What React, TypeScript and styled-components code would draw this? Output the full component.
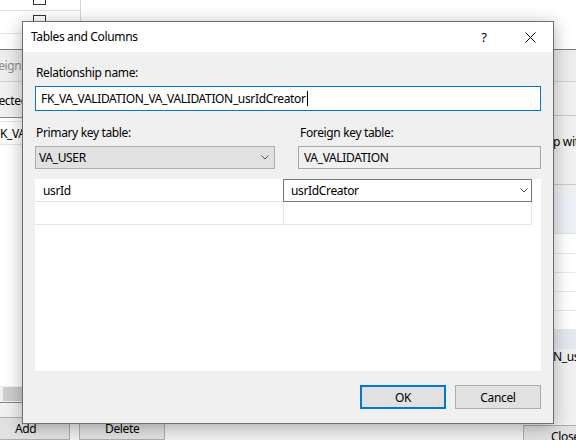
import React from "react";
import styled, { createGlobalStyle } from "styled-components";

const GlobalStyle = createGlobalStyle`
  html, body { margin: 0; padding: 0; background: #fff; }
  body { font-family: "Noto Sans", "Segoe UI", sans-serif; font-size: 12px; color: #000; }
  * { box-sizing: border-box; }
`;

const FONT = `"Noto Sans", "Segoe UI", sans-serif`;

const Screen = styled.div`
  position: relative;
  width: 576px;
  height: 440px;
  overflow: hidden;
  background: #fff;
  display: flex;
  flex-direction: column;
  font-family: ${FONT};
  font-size: 12px;
  letter-spacing: -0.35px;
`;

/* ---------- background: table designer strip ---------- */
const DesignerStrip = styled.div`
  width: 81px;
  height: 45px;
  margin-bottom: 4px;
  border-right: 1px solid #d6d6d6;
  display: flex;
  flex-direction: column;
  flex-shrink: 0;
`;

const DesignerRow = styled.div<{ $h: number }>`
  height: ${(p) => p.$h}px;
  border-bottom: 1px solid #e2e2e2;
  flex-shrink: 0;
`;

const CheckBox = styled.div<{ $top: number }>`
  width: 13px;
  height: 13px;
  margin-left: 33px;
  margin-top: ${(p) => p.$top}px;
  border: 1px solid #333;
  background: #fff;
`;

/* ---------- background: parent window ---------- */
const ParentWindow = styled.div`
  flex: 1;
  border-top: 1px solid #7c7c7c;
  background: #f0f0f0;
  display: flex;
  flex-direction: column;
  min-height: 0;
`;

const ParentTitle = styled.div`
  height: 32px;
  flex-shrink: 0;
  border-bottom: 1px solid #cfcfcf;
  background: #ededed;
  display: flex;
  align-items: center;
  color: #8c8c8c;
  white-space: nowrap;
`;

const ParentTitleText = styled.span`
  margin-left: -19px;
`;

const ParentBody = styled.div`
  flex: 1;
  display: flex;
  justify-content: space-between;
  min-height: 0;
`;

const LeftPane = styled.div`
  width: 200px;
  margin-left: -10px;
  display: flex;
  flex-direction: column;
`;

const PaneLabel = styled.div`
  margin-top: 11px;
  line-height: 16px;
  margin-left: -7px;
  white-space: nowrap;
`;

const ListBox = styled.div`
  margin-top: 8px;
  height: 293px;
  background: #fff;
  border: 1px solid #828790;
  display: flex;
  flex-direction: column;
`;

const ListItem = styled.div`
  margin-top: 3px;
  height: 24px;
  border-top: 1px solid #e4e4e4;
  border-bottom: 1px solid #e4e4e4;
  padding-left: 3px;
  display: flex;
  align-items: center;
  white-space: nowrap;
`;

const ListSpacer = styled.div`
  flex: 1;
`;

const HScroll = styled.div`
  height: 16px;
  background: #f0f0f0;
  display: flex;
  align-items: center;
`;

const HThumb = styled.div`
  margin-left: 12px;
  width: 150px;
  height: 14px;
  background: #cdcdcd;
`;

const PaneButtons = styled.div`
  margin-top: 14px;
  display: flex;
  gap: 9px;
`;

const PaneButton = styled.div<{ $w: number; $pad: number }>`
  width: ${(p) => p.$w}px;
  height: 23px;
  background: #e1e1e1;
  border: 1px solid #adadad;
  padding-left: ${(p) => p.$pad}px;
  display: flex;
  align-items: center;
`;

const RightPane = styled.div`
  width: 60px;
  display: flex;
  flex-direction: column;
  white-space: nowrap;
`;

const InfoTop = styled.div`
  height: 34px;
  border-bottom: 1px solid #cacaca;
  flex-shrink: 0;
`;

const InfoText = styled.div`
  height: 69px;
  border-bottom: 1px solid #cacaca;
  padding-top: 18px;
  padding-left: 37px;
  line-height: 16px;
  flex-shrink: 0;
`;

const PropHeader = styled.div`
  margin-top: 10px;
  height: 39px;
  background: #eceff5;
  border-bottom: 1px solid #dfe2ea;
  flex-shrink: 0;
`;

const PropRow = styled.div<{ $h: number; $sel?: boolean }>`
  height: ${(p) => p.$h}px;
  background: ${(p) => (p.$sel ? "#e4e8f0" : "#fff")};
  border-bottom: 1px solid #e6e8ee;
  flex-shrink: 0;
`;

const PropValue = styled.div`
  padding-left: 37px;
  line-height: 16px;
`;

const CloseButton = styled.div`
  margin-top: auto;
  margin-bottom: -8px;
  margin-left: 7px;
  width: 80px;
  height: 23px;
  background: #e1e1e1;
  border: 1px solid #adadad;
  padding-left: 27px;
  display: flex;
  align-items: center;
  flex-shrink: 0;
`;

/* ---------- dialog ---------- */
const Dialog = styled.div`
  position: absolute;
  left: 22px;
  top: 21px;
  width: 532px;
  height: 403px;
  border: 1px solid #6e6e6e;
  background: #f0f0f0;
  box-shadow: 0 3px 16px rgba(0, 0, 0, 0.3);
  display: flex;
  flex-direction: column;
`;

const TitleBar = styled.div`
  height: 30px;
  flex-shrink: 0;
  background: #fff;
  display: flex;
  align-items: center;
`;

const Title = styled.div`
  flex: 1;
  padding-left: 8px;
  line-height: 16px;
`;

const CaptionButton = styled.div`
  width: 46px;
  height: 30px;
  display: flex;
  align-items: center;
  justify-content: center;
  font-size: 13px;
`;

const Body = styled.div`
  flex: 1;
  padding: 13px 12px 14px;
  display: flex;
  flex-direction: column;
`;

const FieldLabel = styled.div<{ $indent?: number }>`
  line-height: 16px;
  padding-left: ${(p) => p.$indent ?? 1}px;
  white-space: nowrap;
`;

const NameInput = styled.div`
  margin-top: 5px;
  height: 25px;
  background: #fff;
  border: 1px solid #0078d7;
  padding-left: 5px;
  display: flex;
  align-items: center;
  white-space: nowrap;
`;

const Caret = styled.span`
  display: inline-block;
  width: 1px;
  height: 15px;
  background: #000;
  margin-left: 1px;
`;

const KeyRow = styled.div`
  margin-top: 14px;
  display: grid;
  grid-template-columns: 240px 1fr;
  column-gap: 23px;
`;

const KeyColumn = styled.div`
  display: flex;
  flex-direction: column;
  gap: 5px;
`;

const SelectBox = styled.div`
  height: 23px;
  background: #e1e1e1;
  border: 1px solid #adadad;
  padding: 0 5px 0 3px;
  display: flex;
  align-items: center;
  justify-content: space-between;
`;

const ReadOnlyBox = styled.div`
  height: 23px;
  background: #f0f0f0;
  border: 1px solid #a9a9a9;
  padding-left: 5px;
  display: flex;
  align-items: center;
`;

const Panel = styled.div`
  margin-top: 10px;
  height: 192px;
  background: #fff;
`;

const GridTable = styled.div`
  display: grid;
  grid-template-columns: 248px 249px;
`;

const Cell = styled.div<{ $right?: boolean }>`
  height: 23px;
  border-bottom: 1px solid #e6e6e6;
  border-left: ${(p) => (p.$right ? "1px solid #e6e6e6" : "none")};
  border-right: ${(p) => (p.$right ? "1px solid #e6e6e6" : "none")};
  padding-left: 8px;
  display: flex;
  align-items: center;
`;

const ComboCell = styled.div`
  height: 23px;
  border: 1px solid #7a7a7a;
  padding: 0 3px 0 7px;
  display: flex;
  align-items: center;
  justify-content: space-between;
`;

const Footer = styled.div`
  margin-top: 14px;
  display: flex;
  justify-content: flex-end;
  gap: 9px;
`;

const DialogButton = styled.div<{ $primary?: boolean }>`
  width: 86px;
  height: 24px;
  background: #e1e1e1;
  border: ${(p) => (p.$primary ? "2px solid #0078d7" : "1px solid #adadad")};
  display: flex;
  align-items: center;
  justify-content: center;
`;

const Chevron = () => (
  <svg width="8" height="5" viewBox="0 0 8 5">
    <polyline points="0.5,0.5 4,4 7.5,0.5" fill="none" stroke="#555" strokeWidth="1" />
  </svg>
);

const CloseGlyph = () => (
  <svg width="11" height="11" viewBox="0 0 11 11">
    <line x1="0.5" y1="0.5" x2="10.5" y2="10.5" stroke="#000" strokeWidth="1" />
    <line x1="10.5" y1="0.5" x2="0.5" y2="10.5" stroke="#000" strokeWidth="1" />
  </svg>
);

export default function App() {
  return (
    <>
      <GlobalStyle />
      <Screen>
        <DesignerStrip>
          <DesignerRow $h={11}>
            <CheckBox $top={-8} />
          </DesignerRow>
          <DesignerRow $h={23}>
            <CheckBox $top={4} />
          </DesignerRow>
        </DesignerStrip>
        <ParentWindow>
          <ParentTitle>
            <ParentTitleText>Foreign</ParentTitleText>
          </ParentTitle>
          <ParentBody>
            <LeftPane>
              <PaneLabel>Selected</PaneLabel>
              <ListBox>
                <ListItem>FK_VA</ListItem>
                <ListSpacer />
                <HScroll>
                  <HThumb />
                </HScroll>
              </ListBox>
              <PaneButtons>
                <PaneButton $w={80} $pad={24}>Add</PaneButton>
                <PaneButton $w={86} $pad={25}>Delete</PaneButton>
              </PaneButtons>
            </LeftPane>
            <RightPane>
              <InfoTop />
              <InfoText>p with</InfoText>
              <PropHeader />
              <PropRow $h={20} />
              <PropRow $h={19} />
              <PropRow $h={19} />
              <PropRow $h={19} />
              <PropRow $h={19} />
              <PropRow $h={19} $sel />
              <PropValue>N_usrIdCreator</PropValue>
              <CloseButton>Close</CloseButton>
            </RightPane>
          </ParentBody>
        </ParentWindow>

        <Dialog>
          <TitleBar>
            <Title>Tables and Columns</Title>
            <CaptionButton>?</CaptionButton>
            <CaptionButton>
              <CloseGlyph />
            </CaptionButton>
          </TitleBar>
          <Body>
            <FieldLabel>Relationship name:</FieldLabel>
            <NameInput>
              FK_VA_VALIDATION_VA_VALIDATION_usrIdCreator
              <Caret />
            </NameInput>
            <KeyRow>
              <KeyColumn>
                <FieldLabel>Primary key table:</FieldLabel>
                <SelectBox>
                  <span>VA_USER</span>
                  <Chevron />
                </SelectBox>
              </KeyColumn>
              <KeyColumn>
                <FieldLabel $indent={2}>Foreign key table:</FieldLabel>
                <ReadOnlyBox>VA_VALIDATION</ReadOnlyBox>
              </KeyColumn>
            </KeyRow>
            <Panel>
              <GridTable>
                <Cell>usrId</Cell>
                <ComboCell>
                  <span>usrIdCreator</span>
                  <Chevron />
                </ComboCell>
                <Cell />
                <Cell $right />
              </GridTable>
            </Panel>
            <Footer>
              <DialogButton $primary>OK</DialogButton>
              <DialogButton>Cancel</DialogButton>
            </Footer>
          </Body>
        </Dialog>
      </Screen>
    </>
  );
}
